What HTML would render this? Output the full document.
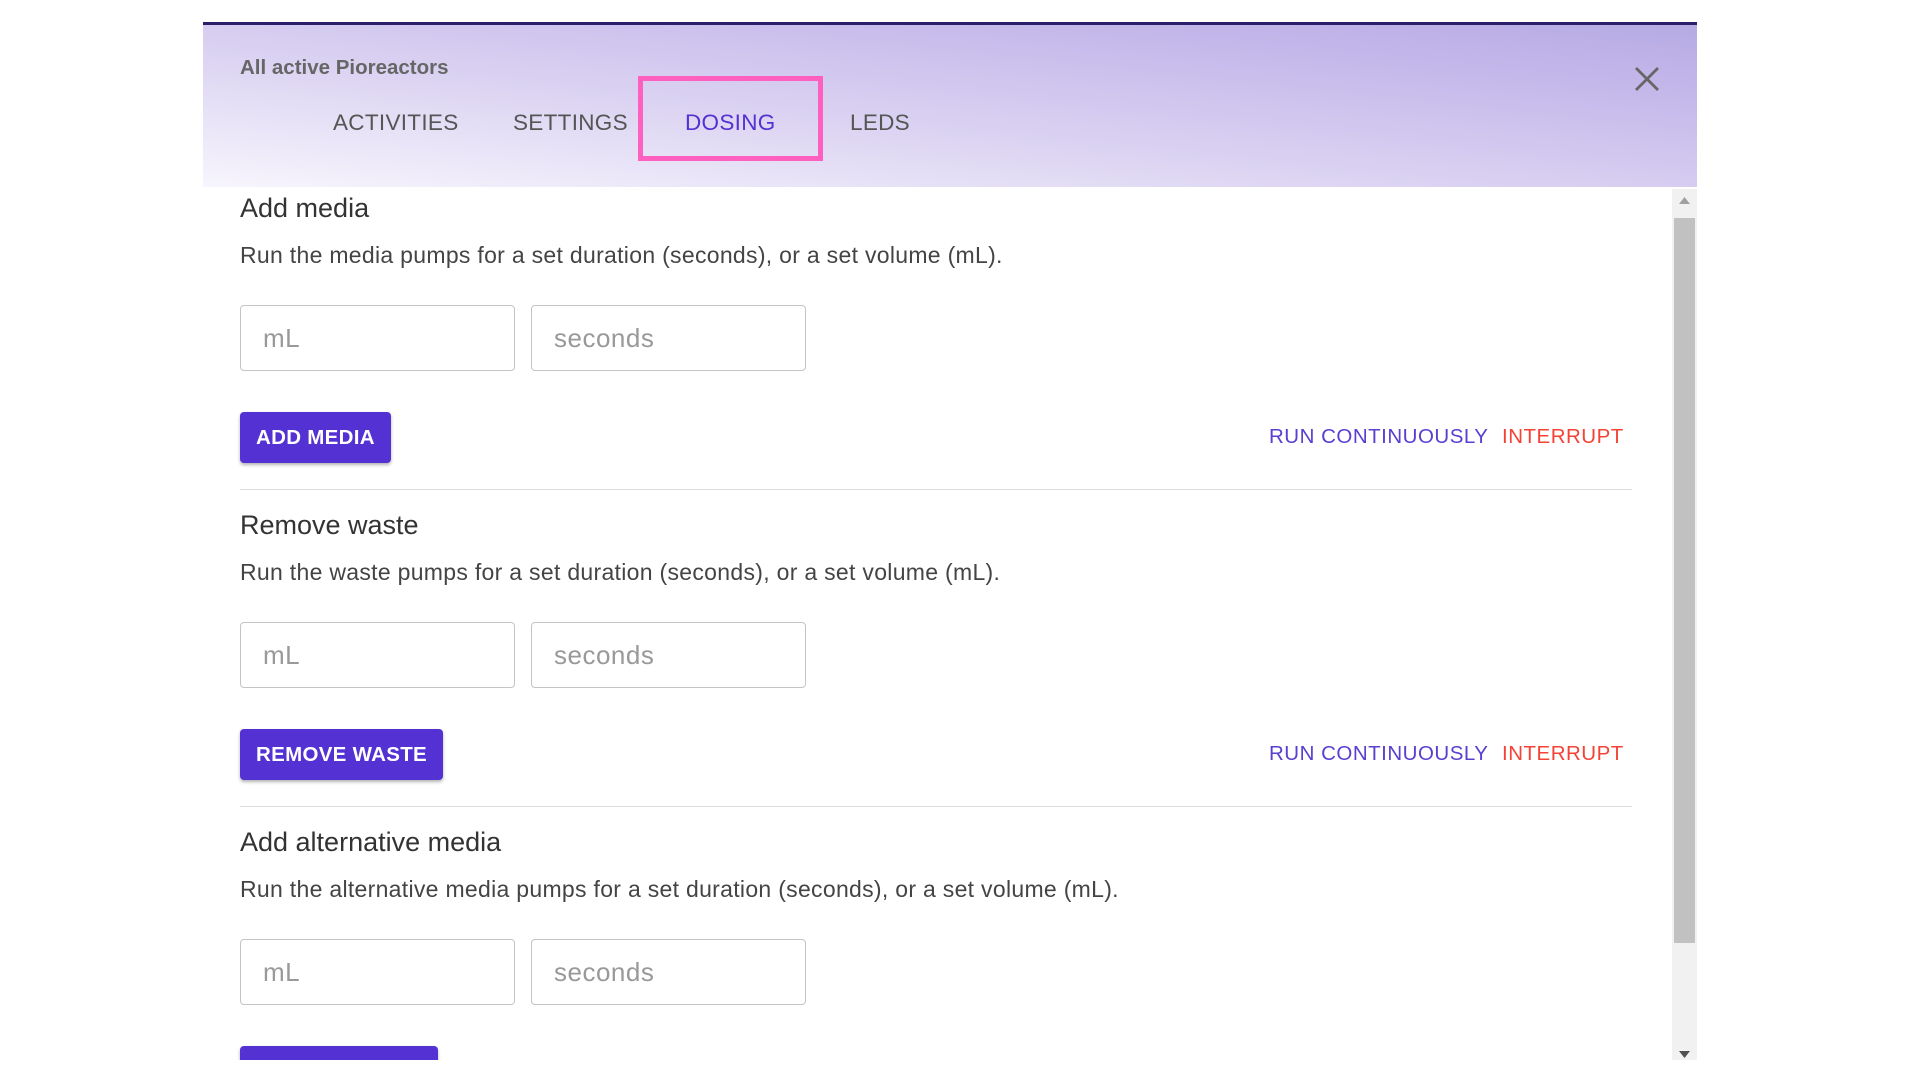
<!DOCTYPE html>
<html><head><meta charset="utf-8"><style>
*{margin:0;padding:0;box-sizing:border-box}
body{width:1920px;height:1080px;background:#fff;font-family:"Liberation Sans",sans-serif;position:relative;overflow:hidden}
.dlg{position:absolute;left:203px;top:22px;width:1494px;height:1038px;border-top:3px solid #2a1f6b;overflow:hidden;background:#fff}
.hdr{position:absolute;left:0;top:0;width:100%;height:162px;background:linear-gradient(to top right,#f7f5fd 0%,#dcd4f2 40%,#c6baeb 75%,#b6aae4 100%)}
.ttl{position:absolute;left:37px;top:31px;font-size:20.5px;font-weight:bold;color:#666}
.tab{position:absolute;top:85px;font-size:22.5px;color:#555;letter-spacing:0.3px}
.pink{position:absolute;left:435px;top:51px;width:185px;height:85px;border:5px solid #ff5fbf}
.x{position:absolute;left:1431px;top:41px}
.sb{position:absolute;left:1469px;top:164px;width:25px;height:874px;background:#f1f1f1}
.th{position:absolute;left:2px;top:29px;width:21px;height:725px;background:#c1c1c1}
.sec{position:absolute;left:37px;width:1406px}
h3{font-weight:normal;font-size:27px;color:#333;position:absolute;top:0;left:0;white-space:nowrap}
p{font-size:23px;letter-spacing:.3px;color:#444;position:absolute;top:49px;left:0;white-space:nowrap}
.in{position:absolute;top:112px;width:275px;height:66px;border:1.5px solid #c4c4c4;border-radius:4px;font-size:26px;letter-spacing:.5px;color:#999;padding:17px 0 0 22px}
.btn{position:absolute;top:219px;left:0;height:51px;background:#5331d3;color:#fff;font-weight:bold;font-size:20.5px;border-radius:4px;padding:14px 16px 0;box-shadow:0 2px 3px rgba(0,0,0,.3);letter-spacing:.3px;white-space:nowrap}
.rc{position:absolute;top:232px;left:1029px;font-size:20.5px;color:#5a3fd1;letter-spacing:.5px;white-space:nowrap}
.ir{position:absolute;top:232px;left:1262px;font-size:20.5px;color:#f44336;letter-spacing:.5px}
.hr{position:absolute;top:296px;left:0;width:1392px;height:1px;background:#ddd}
</style></head><body>
<div class="dlg">
<div class="hdr">
<div class="ttl">All active Pioreactors</div>
<div class="tab" style="left:130px">ACTIVITIES</div>
<div class="tab" style="left:310px">SETTINGS</div>
<div class="tab" style="left:482px;color:#5331d3">DOSING</div>
<div class="tab" style="left:647px">LEDS</div>
<div class="pink"></div>
<svg class="x" width="26" height="26" viewBox="0 0 26 26"><path d="M2 2L24 24M24 2L2 24" stroke="#666" stroke-width="2.8"/></svg>
</div>
<div class="sec" style="top:168px"><h3>Add media</h3><p>Run the media pumps for a set duration (seconds), or a set volume (mL).</p>
<div class="in" style="left:0">mL</div><div class="in" style="left:291px">seconds</div>
<div class="btn">ADD MEDIA</div><div class="rc">RUN CONTINUOUSLY</div><div class="ir">INTERRUPT</div><div class="hr"></div></div>
<div class="sec" style="top:485px"><h3>Remove waste</h3><p>Run the waste pumps for a set duration (seconds), or a set volume (mL).</p>
<div class="in" style="left:0">mL</div><div class="in" style="left:291px">seconds</div>
<div class="btn">REMOVE WASTE</div><div class="rc">RUN CONTINUOUSLY</div><div class="ir">INTERRUPT</div><div class="hr"></div></div>
<div class="sec" style="top:802px"><h3>Add alternative media</h3><p>Run the alternative media pumps for a set duration (seconds), or a set volume (mL).</p>
<div class="in" style="left:0">mL</div><div class="in" style="left:291px">seconds</div>
<div class="btn" style="width:198px">&nbsp;</div></div>
<div class="sb"><svg style="position:absolute;left:7px;top:8px" width="11" height="7"><path d="M0 7L5.5 0L11 7Z" fill="#a0a0a0"/></svg><div class="th"></div><svg style="position:absolute;left:7px;top:862px" width="11" height="7"><path d="M0 0L5.5 7L11 0Z" fill="#505050"/></svg></div>
</div>
</body></html>
